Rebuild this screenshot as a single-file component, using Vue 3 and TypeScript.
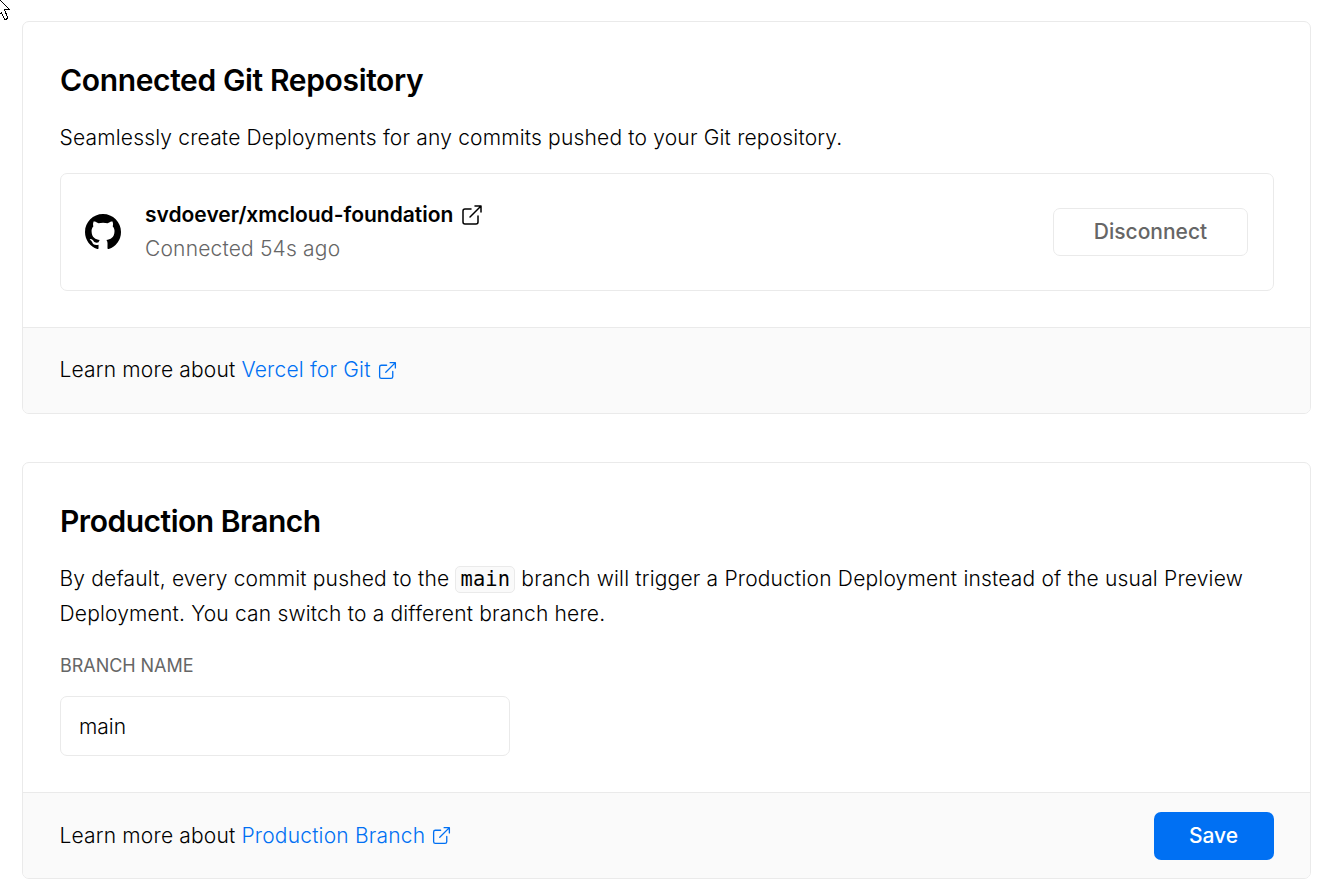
<script setup lang="ts">
import { ref } from 'vue'
const branch = ref('main')
</script>

<template>
  <main class="page">
    <svg class="cursor" width="11" height="22" viewBox="0 0 11 22"><path d="M0.5 0.5L9.5 9.5H4.5L7.5 17.5L6.5 19.5H4.5L1.5 12.5L0 14" fill="#fff" stroke="#000" shape-rendering="crispEdges" /></svg>
    <section class="card">
      <div class="body">
        <h2 class="git-title">Connected Git Repository</h2>
        <p class="seamless">Seamlessly create Deployments for any commits pushed to your Git repository.</p>
        <div class="repo">
          <svg class="github" viewBox="0 0 16 16" width="36" height="36"><path fill="#000" d="M8 0C3.58 0 0 3.58 0 8c0 3.54 2.29 6.53 5.47 7.59.4.07.55-.17.55-.38 0-.19-.01-.82-.01-1.49-2.01.37-2.53-.49-2.69-.94-.09-.23-.48-.94-.82-1.13-.28-.15-.68-.52-.01-.53.63-.01 1.08.58 1.23.82.72 1.21 1.87.87 2.33.66.07-.52.28-.87.51-1.07-1.78-.2-3.64-.89-3.64-3.95 0-.87.31-1.59.82-2.15-.08-.2-.36-1.02.08-2.12 0 0 .67-.21 2.2.82.64-.18 1.32-.27 2-.27s1.36.09 2 .27c1.53-1.04 2.2-.82 2.2-.82.44 1.1.16 1.92.08 2.12.51.56.82 1.27.82 2.15 0 3.07-1.87 3.75-3.65 3.95.29.25.54.73.54 1.48 0 1.07-.01 1.93-.01 2.2 0 .21.15.46.55.38A8.01 8.01 0 0 0 16 8c0-4.42-3.58-8-8-8z" /></svg>
          <div class="info">
            <div class="name"><span>svdoever/xmcloud-foundation</span><svg class="ext" viewBox="0 0 24 24" width="24" height="24"><path d="M18 13v6a2 2 0 0 1-2 2H5a2 2 0 0 1-2-2V8a2 2 0 0 1 2-2h6M15 3h6v6M10 14L21 3" /></svg></div>
            <div class="ago">Connected 54s ago</div>
          </div>
          <button class="disconnect">Disconnect</button>
        </div>
      </div>
      <footer class="git-footer"><span class="learn">Learn more about</span><a><span>Vercel for Git</span><svg class="ext" viewBox="0 0 24 24" width="21" height="21"><path d="M18 13v6a2 2 0 0 1-2 2H5a2 2 0 0 1-2-2V8a2 2 0 0 1 2-2h6M15 3h6v6M10 14L21 3" /></svg></a></footer>
    </section>
    <section class="card second">
      <div class="body">
        <h2>Production Branch</h2>
        <p>By default, every commit pushed to the <code>main</code> branch will trigger a Production Deployment instead of the usual Preview<br>Deployment. You can switch to a different branch here.</p>
        <label for="branch">BRANCH NAME</label>
        <input id="branch" v-model="branch">
      </div>
      <footer><span class="learn">Learn more about</span><a><span>Production Branch</span><svg class="ext" viewBox="0 0 24 24" width="21" height="21"><path d="M18 13v6a2 2 0 0 1-2 2H5a2 2 0 0 1-2-2V8a2 2 0 0 1 2-2h6M15 3h6v6M10 14L21 3" /></svg></a><button class="save">Save</button></footer>
    </section>
  </main>
</template>

<style>
body { margin: 0; background: #fff; }
</style>
<style scoped>
* { box-sizing: border-box; }
.page { position: relative; height: 886px; padding: 21px 14px 0 22px; font-family: Inter, "Liberation Sans", sans-serif; color: #000; overflow: hidden; }
.cursor { position: absolute; left: 0; top: 0; }
.card { height: 393px; border: 1px solid #eaeaea; border-radius: 7px; overflow: hidden; display: flex; flex-direction: column; }
.second { height: 417px; margin-top: 48px; }
.body { flex: 1; padding: 36px 36px 0 37px; }
h2 { margin: 0; font-size: 30px; line-height: 45px; font-weight: 600; letter-spacing: -0.48px; white-space: nowrap; }
.git-title { letter-spacing: -0.36px; }
p { margin: 17px 0 0 -0.5px; font-size: 21px; line-height: 35px; white-space: nowrap; font-weight: 350; letter-spacing: 0.18px; }
.repo { height: 118px; margin-top: 18px; border: 1px solid #eaeaea; border-radius: 7px; display: flex; align-items: center; padding: 0 25px 0 24px; }
.info { margin-left: 24px; font-size: 21px; line-height: 34px; white-space: nowrap; }
.name { font-weight: 600; display: flex; align-items: center; gap: 7px; }
.ago { color: #666; font-weight: 350; letter-spacing: 0.18px; }
.ext { fill: none; stroke: currentColor; stroke-width: 1.5; stroke-linecap: round; stroke-linejoin: round; flex: none; }
button { font-family: inherit; font-size: 21px; font-weight: 500; border-radius: 7px; height: 48px; margin-left: auto; padding: 0; }
.disconnect { width: 195px; border: 1px solid #eaeaea; background: #fff; color: #666; padding-bottom: 1px; }
footer { height: 86px; flex: none; border-top: 1px solid #eaeaea; background: #fafafa; display: flex; align-items: center; padding: 0 36px 0 36.5px; font-size: 21px; font-weight: 350; letter-spacing: 0.18px; white-space: nowrap; }
.git-footer { padding-bottom: 1px; }
.git-footer span { margin-top: -1px; }
a { color: #0070f3; display: flex; align-items: center; gap: 6px; margin-left: 6px; }
code { display: inline-block; vertical-align: baseline; font-family: "DejaVu Sans Mono", monospace; font-size: 20.4px; line-height: 25px; border: 1px solid #eaeaea; background: #fafafa; border-radius: 5px; padding: 0 4px; }
label { display: block; margin-top: 21px; font-size: 18px; line-height: 27px; color: #666; letter-spacing: -0.05px; }
input { display: block; width: 450px; height: 60px; margin-top: 17px; border: 1px solid #eaeaea; border-radius: 7px; padding: 0 18px; font: 350 21px Inter, sans-serif; color: #000; background: #fff; }
button { letter-spacing: 0; }
.save { width: 120px; border: 0; color: #fff; background: #0070f3; padding-right: 1px; }
</style>
